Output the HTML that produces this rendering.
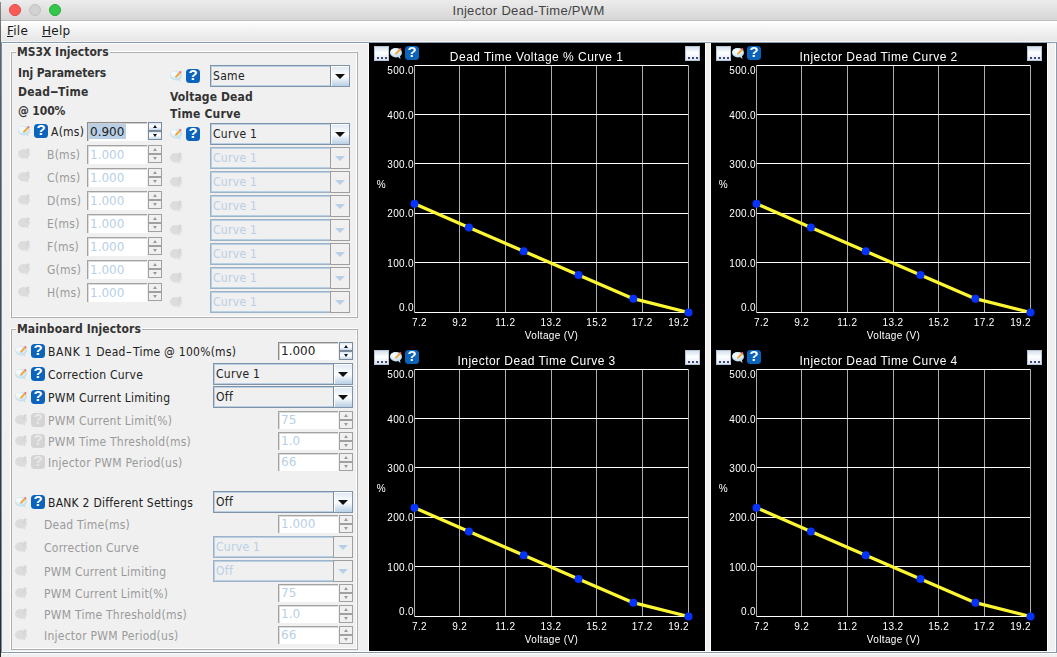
<!DOCTYPE html>
<html><head><meta charset="utf-8"><title>Injector Dead-Time/PWM</title>
<style>
html,body{margin:0;padding:0}
body{width:1057px;height:657px;position:relative;overflow:hidden;background:#f0f0f0;font-family:'DejaVu Sans','Liberation Sans',sans-serif;font-size:12px;color:#333}
.ab{position:absolute;box-sizing:border-box}
.lb{white-space:pre;height:16px;line-height:16px;color:#222;letter-spacing:0.25px;font-family:'DejaVu Sans Condensed','DejaVu Sans',sans-serif}
.lb.b{font-weight:bold;color:#333;font-size:12px;letter-spacing:-0.1px}
.lb.d{color:#9a9a9a}
.hq{width:14px;height:14px;border-radius:3.5px;background:#0a64bc;color:#fff;font:bold 15px/11.5px 'Liberation Sans',sans-serif;text-align:center;overflow:hidden}
.tf{background:#fff;border-top:1px solid #8c8c8c;border-left:1px solid #8c8c8c;box-shadow:inset 1px 1px 0 #cfcfcf;padding:1px 0 0 2px;white-space:pre;color:#222;overflow:hidden;font-family:'DejaVu Sans',sans-serif;letter-spacing:0px}
.tf.dis{border-color:#a2a2a2;box-shadow:inset 1px 1px 0 #dcdcdc}
.mn{font-family:'DejaVu Sans',sans-serif;letter-spacing:0.25px;color:#1a1a1a}
.hy2{display:inline-block;transform:scaleX(1.6);margin:0 1.6px}
.hy{display:inline-block;transform:scaleX(2.0);margin:0 1.6px}
.tf.dis{color:#b8cfe5}
.tf .sel{background:#b8cfe5;display:inline-block;height:15px;line-height:17px;padding:0 2px 0 1px;margin-left:-1px;vertical-align:top}
.sb{border:1px solid #7a8a99;background:linear-gradient(#dbe7f2,#ffffff 45%,#c9daea)}
.sb.dis{border-color:#a0a0a0;background:#f0f0f0}
.sb i{position:absolute;left:50%;top:50%;width:0;height:0;border-left:2.5px solid transparent;border-right:2.5px solid transparent;margin-left:-2.5px}
.sb i.up{border-bottom:3px solid #111;margin-top:-1.5px}
.sb i.dn{border-top:3px solid #111;margin-top:-1.5px}
.sb.dis i.up{border-bottom-color:#9a9a9a}
.sb.dis i.dn{border-top-color:#9a9a9a}
.cb{border:1px solid #8093a7;box-shadow:inset 0 0 0 1px #b8cfe5;background:#f0f0f0;color:#222;white-space:pre;font-family:'DejaVu Sans Condensed','DejaVu Sans',sans-serif;letter-spacing:0.3px}
.cb span{position:absolute;left:2px;top:1px}
.cb b{position:absolute;right:0;top:0;bottom:0;width:18px;border-left:1px solid #7a8a99;background:linear-gradient(#dde8f3,#ffffff 50%,#b8cfe5);box-shadow:inset 1px 1px 0 #fff}
.cb b i{position:absolute;left:50%;top:50%;width:0;height:0;border-left:5px solid transparent;border-right:5px solid transparent;border-top:5px solid #111;margin:-2px 0 0 -5px}
.cb.dis{color:#b8cfe5;border-color:#9fb3c8}
.cb.dis b{background:#f0f0f0;border-left:0;width:18px;right:0;box-shadow:0 0 0 1px #9e9e9e}
.cb.dis b i{border-top-color:#b8cfe5}
.grp{border:1px solid #fff}
.grp:after{content:"";position:absolute;left:0;top:0;right:-2px;bottom:-2px;border:1px solid #b0b0b0}
.gt{background:#f0f0f0;font-weight:bold;font-size:12px;letter-spacing:0px;font-family:'DejaVu Sans Condensed','DejaVu Sans',sans-serif;padding:0 1px;white-space:pre;height:16px;line-height:16px;color:#333}
svg text{font-family:'Liberation Sans',sans-serif;fill:#fff;letter-spacing:0.35px}
.dots{width:15px;height:15px;border:1px solid #b7c4d3;background:linear-gradient(#d6e2ee,#ffffff 45%,#dce8f3)}
.dots i{position:absolute;bottom:1.5px;width:2px;height:1.6px;background:#45457a}
</style></head><body>

<div class="ab" style="left:0;top:0;width:1057px;height:21px;background:linear-gradient(#ececec,#d6d6d6);border-bottom:1px solid #bdbdbd"></div>
<div class="ab" style="left:9px;top:4px;width:12px;height:12px;border-radius:6px;background:#fc5b57;border:1px solid #e2463f"></div>
<div class="ab" style="left:29px;top:4px;width:12px;height:12px;border-radius:6px;background:#d2d2d2;border:1px solid #c0c0c0"></div>
<div class="ab" style="left:49px;top:4px;width:12px;height:12px;border-radius:6px;background:#34c84a;border:1px solid #27aa35"></div>
<div class="ab" style="left:0;top:3px;width:1057px;text-align:center;font:13px/16px 'Liberation Sans',sans-serif;color:#444;letter-spacing:0.3px">Injector Dead-Time/PWM</div>
<div class="ab" style="left:0;top:21px;width:1057px;height:20px;background:linear-gradient(#ffffff,#f4f4f4 40%,#e6e6e6)"></div>
<div class="ab" style="left:0;top:41px;width:1057px;height:1px;background:#f4f4f4"></div>
<div class="ab" style="left:0;top:42px;width:1057px;height:1px;background:#8a9cb0"></div>
<div class="ab lb " style="left:7px;top:23px"><span class="mn"><u>F</u>ile</span></div>
<div class="ab lb " style="left:42px;top:23px"><span class="mn"><u>H</u>elp</span></div>
<div class="ab" style="left:0;top:2px;width:1px;height:655px;background:linear-gradient(#8a8a8a,#666 5%,#4a4a4a 50%,#2a2a2a)"></div>
<div class="ab" style="left:1px;top:43px;width:1px;height:610px;background:#7890a8"></div>
<div class="ab grp" style="left:10px;top:51px;width:347px;height:266px"></div>
<div class="ab gt" style="left:16px;top:44px">MS3X Injectors</div>
<div class="ab grp" style="left:10px;top:328px;width:347px;height:321px"></div>
<div class="ab gt" style="left:16px;top:321px;letter-spacing:0.1px">Mainboard Injectors</div>
<div class="ab lb b" style="left:18px;top:65px">Inj Parameters</div>
<div class="ab lb b" style="left:18px;top:84px"><span style="letter-spacing:0.2px">Dead<span class="hy">-</span>Time</span></div>
<div class="ab lb b" style="left:18px;top:103px">@ 100%</div>
<svg class="ab" style="left:17px;top:124px" width="14" height="14" viewBox="0 0 14 14"><ellipse cx="7" cy="6.7" rx="6" ry="4.8" fill="#c6e1ef"/><ellipse cx="6.3" cy="6" rx="4.9" ry="3.7" fill="#e2f1f9"/><ellipse cx="5.2" cy="5" rx="3" ry="2" fill="#f4fafd"/><path d="M8.4 10.6 L11.5 12.9 L10.9 9.6Z" fill="#c4deeb"/><path d="M6.3 8.6 L6.33 6.99 L10.13 2.89 L11.67 4.31 L7.87 8.41Z" fill="#f4a83a"/><path d="M10.13 2.89 L11.15 1.79 L12.69 3.21 L11.67 4.31Z" fill="#ee5f74"/><path d="M6.3 8.6 L6.33 7.6 L7.2 8.5Z" fill="#a8a29a"/></svg>
<div class="ab hq" style="left:34px;top:124px">?</div>
<div class="ab lb " style="left:51px;top:124px">A(ms)</div>
<div class="ab tf" style="left:87px;top:122px;width:60px;height:19px;line-height:16px"><span class="sel">0.900</span></div><div class="ab sb" style="left:148px;top:122px;width:14px;height:9px"><i class="up"></i></div><div class="ab sb" style="left:148px;top:131px;width:14px;height:9px"><i class="dn"></i></div>
<svg class="ab" style="left:17px;top:147px" width="14" height="14" viewBox="0 0 14 14"><ellipse cx="7" cy="6.8" rx="6" ry="4.8" fill="#dcdcdc"/><path d="M8 10.5 L11.4 13 L10.8 9.6Z" fill="#dcdcdc"/><path d="M8 6.5 L10.7 0.9 L12.9 2.6 L10.6 6.8Z" fill="#d6d6d6"/></svg>
<div class="ab lb d" style="left:47px;top:147px">B(ms)</div>
<div class="ab tf dis" style="left:87px;top:145px;width:60px;height:19px;line-height:16px">1.000</div><div class="ab sb dis" style="left:148px;top:145px;width:14px;height:9px"><i class="up"></i></div><div class="ab sb dis" style="left:148px;top:154px;width:14px;height:9px"><i class="dn"></i></div>
<svg class="ab" style="left:17px;top:170px" width="14" height="14" viewBox="0 0 14 14"><ellipse cx="7" cy="6.8" rx="6" ry="4.8" fill="#dcdcdc"/><path d="M8 10.5 L11.4 13 L10.8 9.6Z" fill="#dcdcdc"/><path d="M8 6.5 L10.7 0.9 L12.9 2.6 L10.6 6.8Z" fill="#d6d6d6"/></svg>
<div class="ab lb d" style="left:47px;top:170px">C(ms)</div>
<div class="ab tf dis" style="left:87px;top:168px;width:60px;height:19px;line-height:16px">1.000</div><div class="ab sb dis" style="left:148px;top:168px;width:14px;height:9px"><i class="up"></i></div><div class="ab sb dis" style="left:148px;top:177px;width:14px;height:9px"><i class="dn"></i></div>
<svg class="ab" style="left:17px;top:193px" width="14" height="14" viewBox="0 0 14 14"><ellipse cx="7" cy="6.8" rx="6" ry="4.8" fill="#dcdcdc"/><path d="M8 10.5 L11.4 13 L10.8 9.6Z" fill="#dcdcdc"/><path d="M8 6.5 L10.7 0.9 L12.9 2.6 L10.6 6.8Z" fill="#d6d6d6"/></svg>
<div class="ab lb d" style="left:47px;top:193px">D(ms)</div>
<div class="ab tf dis" style="left:87px;top:191px;width:60px;height:19px;line-height:16px">1.000</div><div class="ab sb dis" style="left:148px;top:191px;width:14px;height:9px"><i class="up"></i></div><div class="ab sb dis" style="left:148px;top:200px;width:14px;height:9px"><i class="dn"></i></div>
<svg class="ab" style="left:17px;top:216px" width="14" height="14" viewBox="0 0 14 14"><ellipse cx="7" cy="6.8" rx="6" ry="4.8" fill="#dcdcdc"/><path d="M8 10.5 L11.4 13 L10.8 9.6Z" fill="#dcdcdc"/><path d="M8 6.5 L10.7 0.9 L12.9 2.6 L10.6 6.8Z" fill="#d6d6d6"/></svg>
<div class="ab lb d" style="left:47px;top:216px">E(ms)</div>
<div class="ab tf dis" style="left:87px;top:214px;width:60px;height:19px;line-height:16px">1.000</div><div class="ab sb dis" style="left:148px;top:214px;width:14px;height:9px"><i class="up"></i></div><div class="ab sb dis" style="left:148px;top:223px;width:14px;height:9px"><i class="dn"></i></div>
<svg class="ab" style="left:17px;top:239px" width="14" height="14" viewBox="0 0 14 14"><ellipse cx="7" cy="6.8" rx="6" ry="4.8" fill="#dcdcdc"/><path d="M8 10.5 L11.4 13 L10.8 9.6Z" fill="#dcdcdc"/><path d="M8 6.5 L10.7 0.9 L12.9 2.6 L10.6 6.8Z" fill="#d6d6d6"/></svg>
<div class="ab lb d" style="left:47px;top:239px">F(ms)</div>
<div class="ab tf dis" style="left:87px;top:237px;width:60px;height:19px;line-height:16px">1.000</div><div class="ab sb dis" style="left:148px;top:237px;width:14px;height:9px"><i class="up"></i></div><div class="ab sb dis" style="left:148px;top:246px;width:14px;height:9px"><i class="dn"></i></div>
<svg class="ab" style="left:17px;top:262px" width="14" height="14" viewBox="0 0 14 14"><ellipse cx="7" cy="6.8" rx="6" ry="4.8" fill="#dcdcdc"/><path d="M8 10.5 L11.4 13 L10.8 9.6Z" fill="#dcdcdc"/><path d="M8 6.5 L10.7 0.9 L12.9 2.6 L10.6 6.8Z" fill="#d6d6d6"/></svg>
<div class="ab lb d" style="left:47px;top:262px">G(ms)</div>
<div class="ab tf dis" style="left:87px;top:260px;width:60px;height:19px;line-height:16px">1.000</div><div class="ab sb dis" style="left:148px;top:260px;width:14px;height:9px"><i class="up"></i></div><div class="ab sb dis" style="left:148px;top:269px;width:14px;height:9px"><i class="dn"></i></div>
<svg class="ab" style="left:17px;top:285px" width="14" height="14" viewBox="0 0 14 14"><ellipse cx="7" cy="6.8" rx="6" ry="4.8" fill="#dcdcdc"/><path d="M8 10.5 L11.4 13 L10.8 9.6Z" fill="#dcdcdc"/><path d="M8 6.5 L10.7 0.9 L12.9 2.6 L10.6 6.8Z" fill="#d6d6d6"/></svg>
<div class="ab lb d" style="left:47px;top:285px">H(ms)</div>
<div class="ab tf dis" style="left:87px;top:283px;width:60px;height:19px;line-height:16px">1.000</div><div class="ab sb dis" style="left:148px;top:283px;width:14px;height:9px"><i class="up"></i></div><div class="ab sb dis" style="left:148px;top:292px;width:14px;height:9px"><i class="dn"></i></div>
<svg class="ab" style="left:169px;top:69px" width="14" height="14" viewBox="0 0 14 14"><ellipse cx="7" cy="6.7" rx="6" ry="4.8" fill="#c6e1ef"/><ellipse cx="6.3" cy="6" rx="4.9" ry="3.7" fill="#e2f1f9"/><ellipse cx="5.2" cy="5" rx="3" ry="2" fill="#f4fafd"/><path d="M8.4 10.6 L11.5 12.9 L10.9 9.6Z" fill="#c4deeb"/><path d="M6.3 8.6 L6.33 6.99 L10.13 2.89 L11.67 4.31 L7.87 8.41Z" fill="#f4a83a"/><path d="M10.13 2.89 L11.15 1.79 L12.69 3.21 L11.67 4.31Z" fill="#ee5f74"/><path d="M6.3 8.6 L6.33 7.6 L7.2 8.5Z" fill="#a8a29a"/></svg>
<div class="ab hq" style="left:186px;top:69px">?</div>
<div class="ab cb" style="left:210px;top:65px;width:140px;height:22px;line-height:19px"><span>Same</span><b><i></i></b></div>
<div class="ab lb b" style="left:170px;top:89px"><span style="letter-spacing:0.12px">Voltage Dead</span></div>
<div class="ab lb b" style="left:170px;top:106px"><span style="letter-spacing:0.2px">Time Curve</span></div>
<svg class="ab" style="left:169px;top:127px" width="14" height="14" viewBox="0 0 14 14"><ellipse cx="7" cy="6.7" rx="6" ry="4.8" fill="#c6e1ef"/><ellipse cx="6.3" cy="6" rx="4.9" ry="3.7" fill="#e2f1f9"/><ellipse cx="5.2" cy="5" rx="3" ry="2" fill="#f4fafd"/><path d="M8.4 10.6 L11.5 12.9 L10.9 9.6Z" fill="#c4deeb"/><path d="M6.3 8.6 L6.33 6.99 L10.13 2.89 L11.67 4.31 L7.87 8.41Z" fill="#f4a83a"/><path d="M10.13 2.89 L11.15 1.79 L12.69 3.21 L11.67 4.31Z" fill="#ee5f74"/><path d="M6.3 8.6 L6.33 7.6 L7.2 8.5Z" fill="#a8a29a"/></svg>
<div class="ab hq" style="left:186px;top:127px">?</div>
<div class="ab cb" style="left:210px;top:123px;width:140px;height:22px;line-height:19px"><span>Curve 1</span><b><i></i></b></div>
<svg class="ab" style="left:169px;top:151px" width="14" height="14" viewBox="0 0 14 14"><ellipse cx="7" cy="6.8" rx="6" ry="4.8" fill="#dcdcdc"/><path d="M8 10.5 L11.4 13 L10.8 9.6Z" fill="#dcdcdc"/><path d="M8 6.5 L10.7 0.9 L12.9 2.6 L10.6 6.8Z" fill="#d6d6d6"/></svg>
<div class="ab cb dis" style="left:210px;top:147px;width:140px;height:22px;line-height:19px"><span>Curve 1</span><b><i></i></b></div>
<svg class="ab" style="left:169px;top:175px" width="14" height="14" viewBox="0 0 14 14"><ellipse cx="7" cy="6.8" rx="6" ry="4.8" fill="#dcdcdc"/><path d="M8 10.5 L11.4 13 L10.8 9.6Z" fill="#dcdcdc"/><path d="M8 6.5 L10.7 0.9 L12.9 2.6 L10.6 6.8Z" fill="#d6d6d6"/></svg>
<div class="ab cb dis" style="left:210px;top:171px;width:140px;height:22px;line-height:19px"><span>Curve 1</span><b><i></i></b></div>
<svg class="ab" style="left:169px;top:199px" width="14" height="14" viewBox="0 0 14 14"><ellipse cx="7" cy="6.8" rx="6" ry="4.8" fill="#dcdcdc"/><path d="M8 10.5 L11.4 13 L10.8 9.6Z" fill="#dcdcdc"/><path d="M8 6.5 L10.7 0.9 L12.9 2.6 L10.6 6.8Z" fill="#d6d6d6"/></svg>
<div class="ab cb dis" style="left:210px;top:195px;width:140px;height:22px;line-height:19px"><span>Curve 1</span><b><i></i></b></div>
<svg class="ab" style="left:169px;top:223px" width="14" height="14" viewBox="0 0 14 14"><ellipse cx="7" cy="6.8" rx="6" ry="4.8" fill="#dcdcdc"/><path d="M8 10.5 L11.4 13 L10.8 9.6Z" fill="#dcdcdc"/><path d="M8 6.5 L10.7 0.9 L12.9 2.6 L10.6 6.8Z" fill="#d6d6d6"/></svg>
<div class="ab cb dis" style="left:210px;top:219px;width:140px;height:22px;line-height:19px"><span>Curve 1</span><b><i></i></b></div>
<svg class="ab" style="left:169px;top:247px" width="14" height="14" viewBox="0 0 14 14"><ellipse cx="7" cy="6.8" rx="6" ry="4.8" fill="#dcdcdc"/><path d="M8 10.5 L11.4 13 L10.8 9.6Z" fill="#dcdcdc"/><path d="M8 6.5 L10.7 0.9 L12.9 2.6 L10.6 6.8Z" fill="#d6d6d6"/></svg>
<div class="ab cb dis" style="left:210px;top:243px;width:140px;height:22px;line-height:19px"><span>Curve 1</span><b><i></i></b></div>
<svg class="ab" style="left:169px;top:271px" width="14" height="14" viewBox="0 0 14 14"><ellipse cx="7" cy="6.8" rx="6" ry="4.8" fill="#dcdcdc"/><path d="M8 10.5 L11.4 13 L10.8 9.6Z" fill="#dcdcdc"/><path d="M8 6.5 L10.7 0.9 L12.9 2.6 L10.6 6.8Z" fill="#d6d6d6"/></svg>
<div class="ab cb dis" style="left:210px;top:267px;width:140px;height:22px;line-height:19px"><span>Curve 1</span><b><i></i></b></div>
<svg class="ab" style="left:169px;top:295px" width="14" height="14" viewBox="0 0 14 14"><ellipse cx="7" cy="6.8" rx="6" ry="4.8" fill="#dcdcdc"/><path d="M8 10.5 L11.4 13 L10.8 9.6Z" fill="#dcdcdc"/><path d="M8 6.5 L10.7 0.9 L12.9 2.6 L10.6 6.8Z" fill="#d6d6d6"/></svg>
<div class="ab cb dis" style="left:210px;top:291px;width:140px;height:22px;line-height:19px"><span>Curve 1</span><b><i></i></b></div>
<svg class="ab" style="left:14px;top:344px" width="14" height="14" viewBox="0 0 14 14"><ellipse cx="7" cy="6.7" rx="6" ry="4.8" fill="#c6e1ef"/><ellipse cx="6.3" cy="6" rx="4.9" ry="3.7" fill="#e2f1f9"/><ellipse cx="5.2" cy="5" rx="3" ry="2" fill="#f4fafd"/><path d="M8.4 10.6 L11.5 12.9 L10.9 9.6Z" fill="#c4deeb"/><path d="M6.3 8.6 L6.33 6.99 L10.13 2.89 L11.67 4.31 L7.87 8.41Z" fill="#f4a83a"/><path d="M10.13 2.89 L11.15 1.79 L12.69 3.21 L11.67 4.31Z" fill="#ee5f74"/><path d="M6.3 8.6 L6.33 7.6 L7.2 8.5Z" fill="#a8a29a"/></svg>
<div class="ab hq" style="left:31px;top:344px">?</div>
<div class="ab lb " style="left:48px;top:344px"><span style="letter-spacing:0.65px">BANK 1 </span>Dead<span class="hy2">-</span>Time @ 100%(ms)</div>
<div class="ab tf" style="left:278px;top:342px;width:60px;height:18px;line-height:15px">1.000</div><div class="ab sb" style="left:339px;top:342px;width:14px;height:9px"><i class="up"></i></div><div class="ab sb" style="left:339px;top:351px;width:14px;height:9px"><i class="dn"></i></div>
<svg class="ab" style="left:14px;top:367px" width="14" height="14" viewBox="0 0 14 14"><ellipse cx="7" cy="6.7" rx="6" ry="4.8" fill="#c6e1ef"/><ellipse cx="6.3" cy="6" rx="4.9" ry="3.7" fill="#e2f1f9"/><ellipse cx="5.2" cy="5" rx="3" ry="2" fill="#f4fafd"/><path d="M8.4 10.6 L11.5 12.9 L10.9 9.6Z" fill="#c4deeb"/><path d="M6.3 8.6 L6.33 6.99 L10.13 2.89 L11.67 4.31 L7.87 8.41Z" fill="#f4a83a"/><path d="M10.13 2.89 L11.15 1.79 L12.69 3.21 L11.67 4.31Z" fill="#ee5f74"/><path d="M6.3 8.6 L6.33 7.6 L7.2 8.5Z" fill="#a8a29a"/></svg>
<div class="ab hq" style="left:31px;top:367px">?</div>
<div class="ab lb " style="left:48px;top:367px">Correction Curve</div>
<div class="ab cb" style="left:213px;top:363px;width:140px;height:22px;line-height:19px"><span>Curve 1</span><b><i></i></b></div>
<svg class="ab" style="left:14px;top:390px" width="14" height="14" viewBox="0 0 14 14"><ellipse cx="7" cy="6.7" rx="6" ry="4.8" fill="#c6e1ef"/><ellipse cx="6.3" cy="6" rx="4.9" ry="3.7" fill="#e2f1f9"/><ellipse cx="5.2" cy="5" rx="3" ry="2" fill="#f4fafd"/><path d="M8.4 10.6 L11.5 12.9 L10.9 9.6Z" fill="#c4deeb"/><path d="M6.3 8.6 L6.33 6.99 L10.13 2.89 L11.67 4.31 L7.87 8.41Z" fill="#f4a83a"/><path d="M10.13 2.89 L11.15 1.79 L12.69 3.21 L11.67 4.31Z" fill="#ee5f74"/><path d="M6.3 8.6 L6.33 7.6 L7.2 8.5Z" fill="#a8a29a"/></svg>
<div class="ab hq" style="left:31px;top:390px">?</div>
<div class="ab lb " style="left:48px;top:390px">PWM Current Limiting</div>
<div class="ab cb" style="left:213px;top:386px;width:140px;height:22px;line-height:19px"><span>Off</span><b><i></i></b></div>
<svg class="ab" style="left:14px;top:413px" width="14" height="14" viewBox="0 0 14 14"><ellipse cx="7" cy="6.8" rx="6" ry="4.8" fill="#dcdcdc"/><path d="M8 10.5 L11.4 13 L10.8 9.6Z" fill="#dcdcdc"/><path d="M8 6.5 L10.7 0.9 L12.9 2.6 L10.6 6.8Z" fill="#d6d6d6"/></svg>
<div class="ab hq" style="left:31px;top:413px;background:#d4d4d4;color:#e8e8e8">?</div>
<div class="ab lb d" style="left:48px;top:413px">PWM Current Limit(%)</div>
<div class="ab tf dis" style="left:278px;top:411px;width:60px;height:18px;line-height:15px">75</div><div class="ab sb dis" style="left:339px;top:411px;width:14px;height:9px"><i class="up"></i></div><div class="ab sb dis" style="left:339px;top:420px;width:14px;height:9px"><i class="dn"></i></div>
<svg class="ab" style="left:14px;top:434px" width="14" height="14" viewBox="0 0 14 14"><ellipse cx="7" cy="6.8" rx="6" ry="4.8" fill="#dcdcdc"/><path d="M8 10.5 L11.4 13 L10.8 9.6Z" fill="#dcdcdc"/><path d="M8 6.5 L10.7 0.9 L12.9 2.6 L10.6 6.8Z" fill="#d6d6d6"/></svg>
<div class="ab hq" style="left:31px;top:434px;background:#d4d4d4;color:#e8e8e8">?</div>
<div class="ab lb d" style="left:48px;top:434px">PWM Time Threshold(ms)</div>
<div class="ab tf dis" style="left:278px;top:432px;width:60px;height:18px;line-height:15px">1.0</div><div class="ab sb dis" style="left:339px;top:432px;width:14px;height:9px"><i class="up"></i></div><div class="ab sb dis" style="left:339px;top:441px;width:14px;height:9px"><i class="dn"></i></div>
<svg class="ab" style="left:14px;top:455px" width="14" height="14" viewBox="0 0 14 14"><ellipse cx="7" cy="6.8" rx="6" ry="4.8" fill="#dcdcdc"/><path d="M8 10.5 L11.4 13 L10.8 9.6Z" fill="#dcdcdc"/><path d="M8 6.5 L10.7 0.9 L12.9 2.6 L10.6 6.8Z" fill="#d6d6d6"/></svg>
<div class="ab hq" style="left:31px;top:455px;background:#d4d4d4;color:#e8e8e8">?</div>
<div class="ab lb d" style="left:48px;top:455px">Injector PWM Period(us)</div>
<div class="ab tf dis" style="left:278px;top:453px;width:60px;height:18px;line-height:15px">66</div><div class="ab sb dis" style="left:339px;top:453px;width:14px;height:9px"><i class="up"></i></div><div class="ab sb dis" style="left:339px;top:462px;width:14px;height:9px"><i class="dn"></i></div>
<svg class="ab" style="left:14px;top:495px" width="14" height="14" viewBox="0 0 14 14"><ellipse cx="7" cy="6.7" rx="6" ry="4.8" fill="#c6e1ef"/><ellipse cx="6.3" cy="6" rx="4.9" ry="3.7" fill="#e2f1f9"/><ellipse cx="5.2" cy="5" rx="3" ry="2" fill="#f4fafd"/><path d="M8.4 10.6 L11.5 12.9 L10.9 9.6Z" fill="#c4deeb"/><path d="M6.3 8.6 L6.33 6.99 L10.13 2.89 L11.67 4.31 L7.87 8.41Z" fill="#f4a83a"/><path d="M10.13 2.89 L11.15 1.79 L12.69 3.21 L11.67 4.31Z" fill="#ee5f74"/><path d="M6.3 8.6 L6.33 7.6 L7.2 8.5Z" fill="#a8a29a"/></svg>
<div class="ab hq" style="left:31px;top:495px">?</div>
<div class="ab lb " style="left:48px;top:495px">BANK 2 Different Settings</div>
<div class="ab cb" style="left:213px;top:491px;width:140px;height:22px;line-height:19px"><span>Off</span><b><i></i></b></div>
<svg class="ab" style="left:14px;top:517px" width="14" height="14" viewBox="0 0 14 14"><ellipse cx="7" cy="6.8" rx="6" ry="4.8" fill="#dcdcdc"/><path d="M8 10.5 L11.4 13 L10.8 9.6Z" fill="#dcdcdc"/><path d="M8 6.5 L10.7 0.9 L12.9 2.6 L10.6 6.8Z" fill="#d6d6d6"/></svg>
<div class="ab lb d" style="left:44px;top:517px">Dead Time(ms)</div>
<div class="ab tf dis" style="left:278px;top:515px;width:60px;height:18px;line-height:15px">1.000</div><div class="ab sb dis" style="left:339px;top:515px;width:14px;height:9px"><i class="up"></i></div><div class="ab sb dis" style="left:339px;top:524px;width:14px;height:9px"><i class="dn"></i></div>
<svg class="ab" style="left:14px;top:540px" width="14" height="14" viewBox="0 0 14 14"><ellipse cx="7" cy="6.8" rx="6" ry="4.8" fill="#dcdcdc"/><path d="M8 10.5 L11.4 13 L10.8 9.6Z" fill="#dcdcdc"/><path d="M8 6.5 L10.7 0.9 L12.9 2.6 L10.6 6.8Z" fill="#d6d6d6"/></svg>
<div class="ab lb d" style="left:44px;top:540px">Correction Curve</div>
<div class="ab cb dis" style="left:213px;top:536px;width:140px;height:22px;line-height:19px"><span>Curve 1</span><b><i></i></b></div>
<svg class="ab" style="left:14px;top:564px" width="14" height="14" viewBox="0 0 14 14"><ellipse cx="7" cy="6.8" rx="6" ry="4.8" fill="#dcdcdc"/><path d="M8 10.5 L11.4 13 L10.8 9.6Z" fill="#dcdcdc"/><path d="M8 6.5 L10.7 0.9 L12.9 2.6 L10.6 6.8Z" fill="#d6d6d6"/></svg>
<div class="ab lb d" style="left:44px;top:564px">PWM Current Limiting</div>
<div class="ab cb dis" style="left:213px;top:560px;width:140px;height:22px;line-height:19px"><span>Off</span><b><i></i></b></div>
<svg class="ab" style="left:14px;top:586px" width="14" height="14" viewBox="0 0 14 14"><ellipse cx="7" cy="6.8" rx="6" ry="4.8" fill="#dcdcdc"/><path d="M8 10.5 L11.4 13 L10.8 9.6Z" fill="#dcdcdc"/><path d="M8 6.5 L10.7 0.9 L12.9 2.6 L10.6 6.8Z" fill="#d6d6d6"/></svg>
<div class="ab lb d" style="left:44px;top:586px">PWM Current Limit(%)</div>
<div class="ab tf dis" style="left:278px;top:584px;width:60px;height:18px;line-height:15px">75</div><div class="ab sb dis" style="left:339px;top:584px;width:14px;height:9px"><i class="up"></i></div><div class="ab sb dis" style="left:339px;top:593px;width:14px;height:9px"><i class="dn"></i></div>
<svg class="ab" style="left:14px;top:607px" width="14" height="14" viewBox="0 0 14 14"><ellipse cx="7" cy="6.8" rx="6" ry="4.8" fill="#dcdcdc"/><path d="M8 10.5 L11.4 13 L10.8 9.6Z" fill="#dcdcdc"/><path d="M8 6.5 L10.7 0.9 L12.9 2.6 L10.6 6.8Z" fill="#d6d6d6"/></svg>
<div class="ab lb d" style="left:44px;top:607px">PWM Time Threshold(ms)</div>
<div class="ab tf dis" style="left:278px;top:605px;width:60px;height:18px;line-height:15px">1.0</div><div class="ab sb dis" style="left:339px;top:605px;width:14px;height:9px"><i class="up"></i></div><div class="ab sb dis" style="left:339px;top:614px;width:14px;height:9px"><i class="dn"></i></div>
<svg class="ab" style="left:14px;top:628px" width="14" height="14" viewBox="0 0 14 14"><ellipse cx="7" cy="6.8" rx="6" ry="4.8" fill="#dcdcdc"/><path d="M8 10.5 L11.4 13 L10.8 9.6Z" fill="#dcdcdc"/><path d="M8 6.5 L10.7 0.9 L12.9 2.6 L10.6 6.8Z" fill="#d6d6d6"/></svg>
<div class="ab lb d" style="left:44px;top:628px">Injector PWM Period(us)</div>
<div class="ab tf dis" style="left:278px;top:626px;width:60px;height:18px;line-height:15px">66</div><div class="ab sb dis" style="left:339px;top:626px;width:14px;height:9px"><i class="up"></i></div><div class="ab sb dis" style="left:339px;top:635px;width:14px;height:9px"><i class="dn"></i></div>
<div class="ab" style="left:369px;top:43px;width:336px;height:304px;background:#000"></div><svg class="ab" style="left:369px;top:43px;will-change:transform" width="336" height="304" viewBox="0 0 336 304"><line x1="90.5" y1="22.5" x2="90.5" y2="269.5" stroke="#aeaeae" stroke-width="1"/><line x1="136.5" y1="22.5" x2="136.5" y2="269.5" stroke="#aeaeae" stroke-width="1"/><line x1="182.5" y1="22.5" x2="182.5" y2="269.5" stroke="#aeaeae" stroke-width="1"/><line x1="227.5" y1="22.5" x2="227.5" y2="269.5" stroke="#aeaeae" stroke-width="1"/><line x1="273.5" y1="22.5" x2="273.5" y2="269.5" stroke="#aeaeae" stroke-width="1"/><line x1="45.5" y1="22.5" x2="319.5" y2="22.5" stroke="#ffffff" stroke-width="1"/><line x1="45.5" y1="71.5" x2="319.5" y2="71.5" stroke="#ffffff" stroke-width="1"/><line x1="45.5" y1="120.5" x2="319.5" y2="120.5" stroke="#ffffff" stroke-width="1"/><line x1="45.5" y1="170.5" x2="319.5" y2="170.5" stroke="#ffffff" stroke-width="1"/><line x1="45.5" y1="219.5" x2="319.5" y2="219.5" stroke="#ffffff" stroke-width="1"/><line x1="45.5" y1="269.5" x2="319.5" y2="269.5" stroke="#ffffff" stroke-width="1"/><line x1="45.5" y1="22.5" x2="45.5" y2="269.5" stroke="#aeaeae"/><line x1="319.5" y1="22.5" x2="319.5" y2="269.5" stroke="#aeaeae"/><text x="45" y="30.9" font-size="10" text-anchor="end">500.0</text><text x="45" y="75.5" font-size="10" text-anchor="end">400.0</text><text x="45" y="124.9" font-size="10" text-anchor="end">300.0</text><text x="45" y="174.3" font-size="10" text-anchor="end">200.0</text><text x="45" y="223.7" font-size="10" text-anchor="end">100.0</text><text x="45" y="267.5" font-size="10" text-anchor="end">0.0</text><text x="43" y="283" font-size="10">7.2</text><text x="90.7" y="283" font-size="10" text-anchor="middle">9.2</text><text x="136.3" y="283" font-size="10" text-anchor="middle">11.2</text><text x="182.0" y="283" font-size="10" text-anchor="middle">13.2</text><text x="227.7" y="283" font-size="10" text-anchor="middle">15.2</text><text x="273.3" y="283" font-size="10" text-anchor="middle">17.2</text><text x="320" y="283" font-size="10" text-anchor="end">19.2</text><text x="182.5" y="296" font-size="10" text-anchor="middle">Voltage (V)</text><text x="7.8" y="145.3" font-size="10">%</text><text x="167.6" y="18" font-size="12" text-anchor="middle" style="letter-spacing:0.47px">Dead Time Voltage % Curve 1</text><polyline fill="none" stroke="#fdf733" stroke-width="3.3" stroke-linejoin="round" points="45.5,160.8 99.9,184.5 154.7,208.2 209.5,232.0 264.3,255.7 319.5,269.5"/><circle cx="45.5" cy="160.8" r="4" fill="#0432ff"/><circle cx="99.9" cy="184.5" r="4" fill="#0432ff"/><circle cx="154.7" cy="208.2" r="4" fill="#0432ff"/><circle cx="209.5" cy="232.0" r="4" fill="#0432ff"/><circle cx="264.3" cy="255.7" r="4" fill="#0432ff"/><circle cx="319.5" cy="269.5" r="4" fill="#0432ff"/></svg><div class="ab dots" style="left:374px;top:46px"><i style="left:2px"></i><i style="left:6px"></i><i style="left:10px"></i></div><svg class="ab" style="left:389px;top:46px" width="14" height="14" viewBox="0 0 14 14"><ellipse cx="7" cy="6.7" rx="6" ry="4.8" fill="#c6e1ef"/><ellipse cx="6.3" cy="6" rx="4.9" ry="3.7" fill="#e2f1f9"/><ellipse cx="5.2" cy="5" rx="3" ry="2" fill="#f4fafd"/><path d="M8.4 10.6 L11.5 12.9 L10.9 9.6Z" fill="#c4deeb"/><path d="M6.3 8.6 L6.33 6.99 L10.13 2.89 L11.67 4.31 L7.87 8.41Z" fill="#f4a83a"/><path d="M10.13 2.89 L11.15 1.79 L12.69 3.21 L11.67 4.31Z" fill="#ee5f74"/><path d="M6.3 8.6 L6.33 7.6 L7.2 8.5Z" fill="#a8a29a"/></svg><div class="ab hq" style="left:405px;top:46px">?</div><div class="ab dots" style="left:685px;top:46px"><i style="left:2px"></i><i style="left:6px"></i><i style="left:10px"></i></div>
<div class="ab" style="left:711px;top:43px;width:336px;height:304px;background:#000"></div><svg class="ab" style="left:711px;top:43px;will-change:transform" width="336" height="304" viewBox="0 0 336 304"><line x1="90.5" y1="22.5" x2="90.5" y2="269.5" stroke="#aeaeae" stroke-width="1"/><line x1="136.5" y1="22.5" x2="136.5" y2="269.5" stroke="#aeaeae" stroke-width="1"/><line x1="182.5" y1="22.5" x2="182.5" y2="269.5" stroke="#aeaeae" stroke-width="1"/><line x1="227.5" y1="22.5" x2="227.5" y2="269.5" stroke="#aeaeae" stroke-width="1"/><line x1="273.5" y1="22.5" x2="273.5" y2="269.5" stroke="#aeaeae" stroke-width="1"/><line x1="45.5" y1="22.5" x2="319.5" y2="22.5" stroke="#ffffff" stroke-width="1"/><line x1="45.5" y1="71.5" x2="319.5" y2="71.5" stroke="#ffffff" stroke-width="1"/><line x1="45.5" y1="120.5" x2="319.5" y2="120.5" stroke="#ffffff" stroke-width="1"/><line x1="45.5" y1="170.5" x2="319.5" y2="170.5" stroke="#ffffff" stroke-width="1"/><line x1="45.5" y1="219.5" x2="319.5" y2="219.5" stroke="#ffffff" stroke-width="1"/><line x1="45.5" y1="269.5" x2="319.5" y2="269.5" stroke="#ffffff" stroke-width="1"/><line x1="45.5" y1="22.5" x2="45.5" y2="269.5" stroke="#aeaeae"/><line x1="319.5" y1="22.5" x2="319.5" y2="269.5" stroke="#aeaeae"/><text x="45" y="30.9" font-size="10" text-anchor="end">500.0</text><text x="45" y="75.5" font-size="10" text-anchor="end">400.0</text><text x="45" y="124.9" font-size="10" text-anchor="end">300.0</text><text x="45" y="174.3" font-size="10" text-anchor="end">200.0</text><text x="45" y="223.7" font-size="10" text-anchor="end">100.0</text><text x="45" y="267.5" font-size="10" text-anchor="end">0.0</text><text x="43" y="283" font-size="10">7.2</text><text x="90.7" y="283" font-size="10" text-anchor="middle">9.2</text><text x="136.3" y="283" font-size="10" text-anchor="middle">11.2</text><text x="182.0" y="283" font-size="10" text-anchor="middle">13.2</text><text x="227.7" y="283" font-size="10" text-anchor="middle">15.2</text><text x="273.3" y="283" font-size="10" text-anchor="middle">17.2</text><text x="320" y="283" font-size="10" text-anchor="end">19.2</text><text x="182.5" y="296" font-size="10" text-anchor="middle">Voltage (V)</text><text x="7.8" y="145.3" font-size="10">%</text><text x="167.6" y="18" font-size="12" text-anchor="middle" style="letter-spacing:0.47px">Injector Dead Time Curve 2</text><polyline fill="none" stroke="#fdf733" stroke-width="3.3" stroke-linejoin="round" points="45.5,160.8 99.9,184.5 154.7,208.2 209.5,232.0 264.3,255.7 319.5,269.5"/><circle cx="45.5" cy="160.8" r="4" fill="#0432ff"/><circle cx="99.9" cy="184.5" r="4" fill="#0432ff"/><circle cx="154.7" cy="208.2" r="4" fill="#0432ff"/><circle cx="209.5" cy="232.0" r="4" fill="#0432ff"/><circle cx="264.3" cy="255.7" r="4" fill="#0432ff"/><circle cx="319.5" cy="269.5" r="4" fill="#0432ff"/></svg><div class="ab dots" style="left:716px;top:46px"><i style="left:2px"></i><i style="left:6px"></i><i style="left:10px"></i></div><svg class="ab" style="left:731px;top:46px" width="14" height="14" viewBox="0 0 14 14"><ellipse cx="7" cy="6.7" rx="6" ry="4.8" fill="#c6e1ef"/><ellipse cx="6.3" cy="6" rx="4.9" ry="3.7" fill="#e2f1f9"/><ellipse cx="5.2" cy="5" rx="3" ry="2" fill="#f4fafd"/><path d="M8.4 10.6 L11.5 12.9 L10.9 9.6Z" fill="#c4deeb"/><path d="M6.3 8.6 L6.33 6.99 L10.13 2.89 L11.67 4.31 L7.87 8.41Z" fill="#f4a83a"/><path d="M10.13 2.89 L11.15 1.79 L12.69 3.21 L11.67 4.31Z" fill="#ee5f74"/><path d="M6.3 8.6 L6.33 7.6 L7.2 8.5Z" fill="#a8a29a"/></svg><div class="ab hq" style="left:747px;top:46px">?</div><div class="ab dots" style="left:1027px;top:46px"><i style="left:2px"></i><i style="left:6px"></i><i style="left:10px"></i></div>
<div class="ab" style="left:369px;top:347px;width:336px;height:304px;background:#000"></div><svg class="ab" style="left:369px;top:347px;will-change:transform" width="336" height="304" viewBox="0 0 336 304"><line x1="90.5" y1="22.5" x2="90.5" y2="269.5" stroke="#aeaeae" stroke-width="1"/><line x1="136.5" y1="22.5" x2="136.5" y2="269.5" stroke="#aeaeae" stroke-width="1"/><line x1="182.5" y1="22.5" x2="182.5" y2="269.5" stroke="#aeaeae" stroke-width="1"/><line x1="227.5" y1="22.5" x2="227.5" y2="269.5" stroke="#aeaeae" stroke-width="1"/><line x1="273.5" y1="22.5" x2="273.5" y2="269.5" stroke="#aeaeae" stroke-width="1"/><line x1="45.5" y1="22.5" x2="319.5" y2="22.5" stroke="#ffffff" stroke-width="1"/><line x1="45.5" y1="71.5" x2="319.5" y2="71.5" stroke="#ffffff" stroke-width="1"/><line x1="45.5" y1="120.5" x2="319.5" y2="120.5" stroke="#ffffff" stroke-width="1"/><line x1="45.5" y1="170.5" x2="319.5" y2="170.5" stroke="#ffffff" stroke-width="1"/><line x1="45.5" y1="219.5" x2="319.5" y2="219.5" stroke="#ffffff" stroke-width="1"/><line x1="45.5" y1="269.5" x2="319.5" y2="269.5" stroke="#ffffff" stroke-width="1"/><line x1="45.5" y1="22.5" x2="45.5" y2="269.5" stroke="#aeaeae"/><line x1="319.5" y1="22.5" x2="319.5" y2="269.5" stroke="#aeaeae"/><text x="45" y="30.9" font-size="10" text-anchor="end">500.0</text><text x="45" y="75.5" font-size="10" text-anchor="end">400.0</text><text x="45" y="124.9" font-size="10" text-anchor="end">300.0</text><text x="45" y="174.3" font-size="10" text-anchor="end">200.0</text><text x="45" y="223.7" font-size="10" text-anchor="end">100.0</text><text x="45" y="267.5" font-size="10" text-anchor="end">0.0</text><text x="43" y="283" font-size="10">7.2</text><text x="90.7" y="283" font-size="10" text-anchor="middle">9.2</text><text x="136.3" y="283" font-size="10" text-anchor="middle">11.2</text><text x="182.0" y="283" font-size="10" text-anchor="middle">13.2</text><text x="227.7" y="283" font-size="10" text-anchor="middle">15.2</text><text x="273.3" y="283" font-size="10" text-anchor="middle">17.2</text><text x="320" y="283" font-size="10" text-anchor="end">19.2</text><text x="182.5" y="296" font-size="10" text-anchor="middle">Voltage (V)</text><text x="7.8" y="145.3" font-size="10">%</text><text x="167.6" y="18" font-size="12" text-anchor="middle" style="letter-spacing:0.47px">Injector Dead Time Curve 3</text><polyline fill="none" stroke="#fdf733" stroke-width="3.3" stroke-linejoin="round" points="45.5,160.8 99.9,184.5 154.7,208.2 209.5,232.0 264.3,255.7 319.5,269.5"/><circle cx="45.5" cy="160.8" r="4" fill="#0432ff"/><circle cx="99.9" cy="184.5" r="4" fill="#0432ff"/><circle cx="154.7" cy="208.2" r="4" fill="#0432ff"/><circle cx="209.5" cy="232.0" r="4" fill="#0432ff"/><circle cx="264.3" cy="255.7" r="4" fill="#0432ff"/><circle cx="319.5" cy="269.5" r="4" fill="#0432ff"/></svg><div class="ab dots" style="left:374px;top:350px"><i style="left:2px"></i><i style="left:6px"></i><i style="left:10px"></i></div><svg class="ab" style="left:389px;top:350px" width="14" height="14" viewBox="0 0 14 14"><ellipse cx="7" cy="6.7" rx="6" ry="4.8" fill="#c6e1ef"/><ellipse cx="6.3" cy="6" rx="4.9" ry="3.7" fill="#e2f1f9"/><ellipse cx="5.2" cy="5" rx="3" ry="2" fill="#f4fafd"/><path d="M8.4 10.6 L11.5 12.9 L10.9 9.6Z" fill="#c4deeb"/><path d="M6.3 8.6 L6.33 6.99 L10.13 2.89 L11.67 4.31 L7.87 8.41Z" fill="#f4a83a"/><path d="M10.13 2.89 L11.15 1.79 L12.69 3.21 L11.67 4.31Z" fill="#ee5f74"/><path d="M6.3 8.6 L6.33 7.6 L7.2 8.5Z" fill="#a8a29a"/></svg><div class="ab hq" style="left:405px;top:350px">?</div><div class="ab dots" style="left:685px;top:350px"><i style="left:2px"></i><i style="left:6px"></i><i style="left:10px"></i></div>
<div class="ab" style="left:711px;top:347px;width:336px;height:304px;background:#000"></div><svg class="ab" style="left:711px;top:347px;will-change:transform" width="336" height="304" viewBox="0 0 336 304"><line x1="90.5" y1="22.5" x2="90.5" y2="269.5" stroke="#aeaeae" stroke-width="1"/><line x1="136.5" y1="22.5" x2="136.5" y2="269.5" stroke="#aeaeae" stroke-width="1"/><line x1="182.5" y1="22.5" x2="182.5" y2="269.5" stroke="#aeaeae" stroke-width="1"/><line x1="227.5" y1="22.5" x2="227.5" y2="269.5" stroke="#aeaeae" stroke-width="1"/><line x1="273.5" y1="22.5" x2="273.5" y2="269.5" stroke="#aeaeae" stroke-width="1"/><line x1="45.5" y1="22.5" x2="319.5" y2="22.5" stroke="#ffffff" stroke-width="1"/><line x1="45.5" y1="71.5" x2="319.5" y2="71.5" stroke="#ffffff" stroke-width="1"/><line x1="45.5" y1="120.5" x2="319.5" y2="120.5" stroke="#ffffff" stroke-width="1"/><line x1="45.5" y1="170.5" x2="319.5" y2="170.5" stroke="#ffffff" stroke-width="1"/><line x1="45.5" y1="219.5" x2="319.5" y2="219.5" stroke="#ffffff" stroke-width="1"/><line x1="45.5" y1="269.5" x2="319.5" y2="269.5" stroke="#ffffff" stroke-width="1"/><line x1="45.5" y1="22.5" x2="45.5" y2="269.5" stroke="#aeaeae"/><line x1="319.5" y1="22.5" x2="319.5" y2="269.5" stroke="#aeaeae"/><text x="45" y="30.9" font-size="10" text-anchor="end">500.0</text><text x="45" y="75.5" font-size="10" text-anchor="end">400.0</text><text x="45" y="124.9" font-size="10" text-anchor="end">300.0</text><text x="45" y="174.3" font-size="10" text-anchor="end">200.0</text><text x="45" y="223.7" font-size="10" text-anchor="end">100.0</text><text x="45" y="267.5" font-size="10" text-anchor="end">0.0</text><text x="43" y="283" font-size="10">7.2</text><text x="90.7" y="283" font-size="10" text-anchor="middle">9.2</text><text x="136.3" y="283" font-size="10" text-anchor="middle">11.2</text><text x="182.0" y="283" font-size="10" text-anchor="middle">13.2</text><text x="227.7" y="283" font-size="10" text-anchor="middle">15.2</text><text x="273.3" y="283" font-size="10" text-anchor="middle">17.2</text><text x="320" y="283" font-size="10" text-anchor="end">19.2</text><text x="182.5" y="296" font-size="10" text-anchor="middle">Voltage (V)</text><text x="7.8" y="145.3" font-size="10">%</text><text x="167.6" y="18" font-size="12" text-anchor="middle" style="letter-spacing:0.47px">Injector Dead Time Curve 4</text><polyline fill="none" stroke="#fdf733" stroke-width="3.3" stroke-linejoin="round" points="45.5,160.8 99.9,184.5 154.7,208.2 209.5,232.0 264.3,255.7 319.5,269.5"/><circle cx="45.5" cy="160.8" r="4" fill="#0432ff"/><circle cx="99.9" cy="184.5" r="4" fill="#0432ff"/><circle cx="154.7" cy="208.2" r="4" fill="#0432ff"/><circle cx="209.5" cy="232.0" r="4" fill="#0432ff"/><circle cx="264.3" cy="255.7" r="4" fill="#0432ff"/><circle cx="319.5" cy="269.5" r="4" fill="#0432ff"/></svg><div class="ab dots" style="left:716px;top:350px"><i style="left:2px"></i><i style="left:6px"></i><i style="left:10px"></i></div><svg class="ab" style="left:731px;top:350px" width="14" height="14" viewBox="0 0 14 14"><ellipse cx="7" cy="6.7" rx="6" ry="4.8" fill="#c6e1ef"/><ellipse cx="6.3" cy="6" rx="4.9" ry="3.7" fill="#e2f1f9"/><ellipse cx="5.2" cy="5" rx="3" ry="2" fill="#f4fafd"/><path d="M8.4 10.6 L11.5 12.9 L10.9 9.6Z" fill="#c4deeb"/><path d="M6.3 8.6 L6.33 6.99 L10.13 2.89 L11.67 4.31 L7.87 8.41Z" fill="#f4a83a"/><path d="M10.13 2.89 L11.15 1.79 L12.69 3.21 L11.67 4.31Z" fill="#ee5f74"/><path d="M6.3 8.6 L6.33 7.6 L7.2 8.5Z" fill="#a8a29a"/></svg><div class="ab hq" style="left:747px;top:350px">?</div><div class="ab dots" style="left:1027px;top:350px"><i style="left:2px"></i><i style="left:6px"></i><i style="left:10px"></i></div>
<div class="ab" style="left:705px;top:43px;width:1px;height:608px;background:#fff"></div>
<div class="ab" style="left:710px;top:43px;width:1px;height:608px;background:#fff"></div>
<div class="ab" style="left:1047px;top:43px;width:1px;height:608px;background:#fff"></div>
<div class="ab" style="left:1055px;top:43px;width:1px;height:608px;background:#fff"></div>
<div class="ab" style="left:368px;top:43px;width:1px;height:608px;background:#fff"></div>
<div class="ab" style="left:2px;top:43px;width:366px;height:1px;background:#fff"></div>
<div class="ab" style="left:1056px;top:42px;width:1px;height:611px;background:#8a9bb0"></div>
<div class="ab" style="left:2px;top:651px;width:1054px;height:1px;background:#fff"></div>
<div class="ab" style="left:1px;top:652px;width:1056px;height:1px;background:#8597ab"></div>
<div class="ab" style="left:1px;top:653px;width:1056px;height:1px;background:#fff"></div>
</body></html>
